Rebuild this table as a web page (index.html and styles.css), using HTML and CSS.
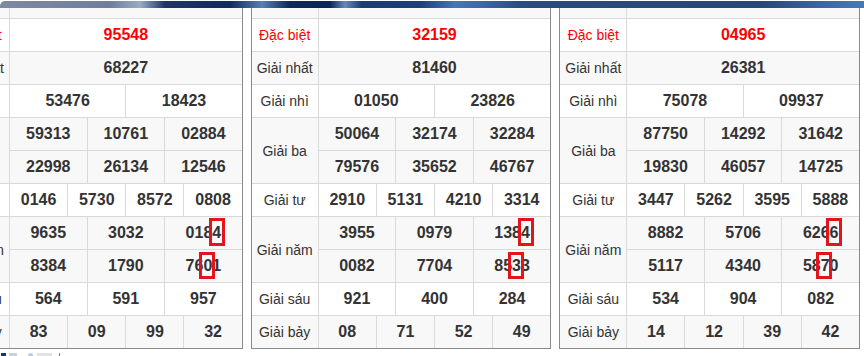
FILE: index.html
```html
<!DOCTYPE html>
<html lang="vi">
<head>
<meta charset="utf-8">
<title>Kết quả xổ số</title>
<link rel="stylesheet" href="styles.css">
</head>
<body>
<div class="topbar"></div>
<div class="tables">
  <div class="kq">
    <div class="grid">
      <div class="lbl g"></div><div class="s12 g"></div>
      <div class="lbl red">Đặc biệt</div><div class="n s12 red">95548</div>
      <div class="lbl g">Giải nhất</div><div class="n s12 g">68227</div>
      <div class="lbl">Giải nhì</div><div class="n s6">53476</div><div class="n s6">18423</div>
      <div class="lbl r2 g">Giải ba</div><div class="n s4 g">59313</div><div class="n s4 g">10761</div><div class="n s4 g">02884</div>
      <div class="n s4 g">22998</div><div class="n s4 g">26134</div><div class="n s4 g">12546</div>
      <div class="lbl">Giải tư</div><div class="n s3">0146</div><div class="n s3">5730</div><div class="n s3">8572</div><div class="n s3">0808</div>
      <div class="lbl r2 g">Giải năm</div><div class="n s4 g">9635</div><div class="n s4 g">3032</div><div class="n s4 g">0184</div>
      <div class="n s4 g">8384</div><div class="n s4 g">1790</div><div class="n s4 g">7601</div>
      <div class="lbl">Giải sáu</div><div class="n s4">564</div><div class="n s4">591</div><div class="n s4">957</div>
      <div class="lbl g">Giải bảy</div><div class="n s3 g">83</div><div class="n s3 g">09</div><div class="n s3 g">99</div><div class="n s3 g">32</div>
    </div>
    <span class="mark m1"></span><span class="mark m2"></span>
  </div>
  <div class="kq">
    <div class="grid">
      <div class="lbl g"></div><div class="s12 g"></div>
      <div class="lbl red">Đặc biệt</div><div class="n s12 red">32159</div>
      <div class="lbl g">Giải nhất</div><div class="n s12 g">81460</div>
      <div class="lbl">Giải nhì</div><div class="n s6">01050</div><div class="n s6">23826</div>
      <div class="lbl r2 g">Giải ba</div><div class="n s4 g">50064</div><div class="n s4 g">32174</div><div class="n s4 g">32284</div>
      <div class="n s4 g">79576</div><div class="n s4 g">35652</div><div class="n s4 g">46767</div>
      <div class="lbl">Giải tư</div><div class="n s3">2910</div><div class="n s3">5131</div><div class="n s3">4210</div><div class="n s3">3314</div>
      <div class="lbl r2 g">Giải năm</div><div class="n s4 g">3955</div><div class="n s4 g">0979</div><div class="n s4 g">1384</div>
      <div class="n s4 g">0082</div><div class="n s4 g">7704</div><div class="n s4 g">8533</div>
      <div class="lbl">Giải sáu</div><div class="n s4">921</div><div class="n s4">400</div><div class="n s4">284</div>
      <div class="lbl g">Giải bảy</div><div class="n s3 g">08</div><div class="n s3 g">71</div><div class="n s3 g">52</div><div class="n s3 g">49</div>
    </div>
    <span class="mark m1"></span><span class="mark m2"></span>
  </div>
  <div class="kq">
    <div class="grid">
      <div class="lbl g"></div><div class="s12 g"></div>
      <div class="lbl red">Đặc biệt</div><div class="n s12 red">04965</div>
      <div class="lbl g">Giải nhất</div><div class="n s12 g">26381</div>
      <div class="lbl">Giải nhì</div><div class="n s6">75078</div><div class="n s6">09937</div>
      <div class="lbl r2 g">Giải ba</div><div class="n s4 g">87750</div><div class="n s4 g">14292</div><div class="n s4 g">31642</div>
      <div class="n s4 g">19830</div><div class="n s4 g">46057</div><div class="n s4 g">14725</div>
      <div class="lbl">Giải tư</div><div class="n s3">3447</div><div class="n s3">5262</div><div class="n s3">3595</div><div class="n s3">5888</div>
      <div class="lbl r2 g">Giải năm</div><div class="n s4 g">8882</div><div class="n s4 g">5706</div><div class="n s4 g">6266</div>
      <div class="n s4 g">5117</div><div class="n s4 g">4340</div><div class="n s4 g">5870</div>
      <div class="lbl">Giải sáu</div><div class="n s4">534</div><div class="n s4">904</div><div class="n s4">082</div>
      <div class="lbl g">Giải bảy</div><div class="n s3 g">14</div><div class="n s3 g">12</div><div class="n s3 g">39</div><div class="n s3 g">42</div>
    </div>
    <span class="mark m1"></span><span class="mark m2"></span>
  </div>
</div>
<div class="foot">
  <span class="f1"></span><span class="f2"></span><span class="f3"></span><span class="f4"></span><span class="f5"></span>
</div>
</body>
</html>
```
FILE: styles.css
```css
* { box-sizing: border-box; }
html, body { overflow: hidden; }
body {
  margin: 0;
  background: #fff;
  font-family: "Liberation Sans", Arial, sans-serif;
  color: #333;
}
.topbar {
  height: 7px;
  margin-top: 1px;
  border-top-left-radius: 5px;
  background: linear-gradient(90deg,
    #7e89a2 0px, #6f7e9c 110px, #9cabc4 140px, #1e3666 165px,
    #112b5c 230px, #5a7db4 262px, #0c2857 290px, #0a2656 330px,
    #6a88b8 345px, #183b71 362px, #1d4079 420px, #4676b4 455px,
    #3d6aa6 480px, #2a4b80 520px, #2b4a7a 600px, #284677 760px,
    #3e6aa8 830px, #4a78b6 864px);
}
.tables {
  display: flex;
  gap: 8px;
  margin-left: -58px;
}
.kq {
  position: relative;
  flex: none;
  width: 300.67px;
  border: 1px solid #8a8a8a;
  border-top: 0;
  overflow: hidden;
}
.grid {
  display: grid;
  grid-template-columns: 67px repeat(12, 1fr);
  grid-template-rows: 11px repeat(10, 33px);
  margin-right: -1px;
  margin-bottom: -1px;
}
.grid > div {
  display: flex;
  align-items: center;
  justify-content: center;
  border-right: 1px solid #d9d9d9;
  border-bottom: 1px solid #d9d9d9;
  background: #fff;
  white-space: nowrap;
}
.grid > .g { background: #f8f8f8; }
.lbl { font-size: 14px; }
.n { font-size: 16px; font-weight: bold; }
.grid > .red { color: #f00; }
.s12 { grid-column: span 12; }
.s6 { grid-column: span 6; }
.s4 { grid-column: span 4; }
.s3 { grid-column: span 3; }
.r2 { grid-row: span 2; }
.mark {
  position: absolute;
  width: 16px;
  border: 3px solid #e3141b;
}
.m1 { left: 266px; top: 210px; height: 28px; }
.m2 { left: 256px; top: 244px; height: 27px; }
.foot {
  display: flex;
  align-items: flex-start;
  margin-top: 4px;
  height: 10px;
}
.foot span { display: block; height: 10px; }
.f1 { width: 5px; margin-left: 1px; background: #1b3766; }
.f2 { width: 8px; margin-left: 3px; background: #c9d2de; }
.f3 { width: 5px; margin-left: 11px; background: #bccbdd; border-radius: 3px; }
.f4 { width: 15px; margin-left: 4px; background: #e2e2e2; }
.f5 { width: 1px; margin-left: 7px; background: #777; }
```
